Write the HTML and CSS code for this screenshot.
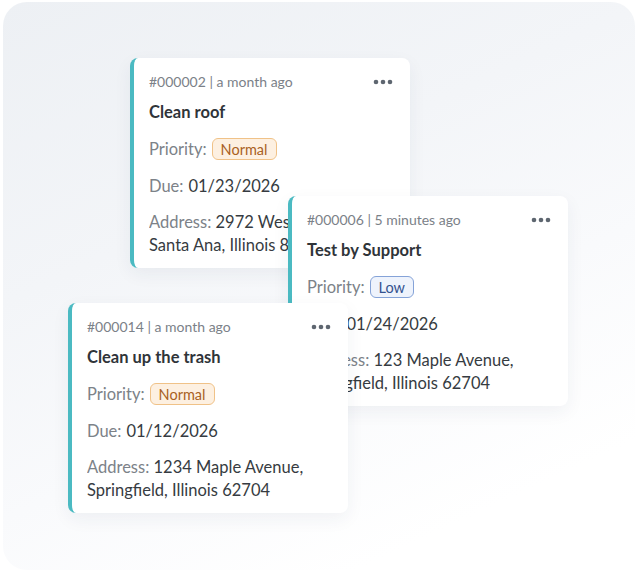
FILE: index.html
```html
<!DOCTYPE html>
<html lang="en">
<head>
<meta charset="utf-8">
<title>Tasks</title>
<link rel="stylesheet" href="styles.css">
</head>
<body>
<div class="canvas">
  <div class="card card-a">
    <div class="meta-row">
      <span class="meta">#000002 | a month ago</span>
      <svg class="dots" width="20" height="6" viewBox="0 0 20 6"><circle cx="3" cy="3" r="2.3"/><circle cx="10" cy="3" r="2.3"/><circle cx="17" cy="3" r="2.3"/></svg>
    </div>
    <div class="title">Clean roof</div>
    <div class="row"><span class="label">Priority:</span><span class="badge normal">Normal</span></div>
    <div class="row"><span class="label">Due:</span><span class="value">01/23/2026</span></div>
    <div class="addr"><span class="label">Address:</span> <span class="value">2972 Westheimer Rd.<br>Santa Ana, Illinois 85486</span></div>
  </div>
  <div class="card card-b">
    <div class="meta-row">
      <span class="meta">#000006 | 5 minutes ago</span>
      <svg class="dots" width="20" height="6" viewBox="0 0 20 6"><circle cx="3" cy="3" r="2.3"/><circle cx="10" cy="3" r="2.3"/><circle cx="17" cy="3" r="2.3"/></svg>
    </div>
    <div class="title">Test by Support</div>
    <div class="row"><span class="label">Priority:</span><span class="badge low">Low</span></div>
    <div class="row"><span class="label">Due:</span><span class="value">01/24/2026</span></div>
    <div class="addr"><span class="label">Address:</span> <span class="value">123 Maple Avenue,<br>Springfield, Illinois 62704</span></div>
  </div>
  <div class="card card-c">
    <div class="meta-row">
      <span class="meta">#000014 | a month ago</span>
      <svg class="dots" width="20" height="6" viewBox="0 0 20 6"><circle cx="3" cy="3" r="2.3"/><circle cx="10" cy="3" r="2.3"/><circle cx="17" cy="3" r="2.3"/></svg>
    </div>
    <div class="title">Clean up the trash</div>
    <div class="row"><span class="label">Priority:</span><span class="badge normal">Normal</span></div>
    <div class="row"><span class="label">Due:</span><span class="value">01/12/2026</span></div>
    <div class="addr"><span class="label">Address:</span> <span class="value">1234 Maple Avenue,<br>Springfield, Illinois 62704</span></div>
  </div>
</div>
</body>
</html>
```
FILE: styles.css
```css
html, body {
  margin: 0;
  padding: 0;
  background: #ffffff;
}
body {
  font-family: Lato, "Noto Sans", sans-serif;
  padding: 2px 2px 3px 3px;
}
.canvas {
  position: relative;
  width: 632px;
  height: 568px;
  border-radius: 24px;
  background: linear-gradient(155deg, #edf0f4 0%, #f3f5f8 35%, #f9fafc 60%, #ffffff 85%);
  overflow: hidden;
}
.card {
  position: absolute;
  width: 280px;
  height: 210px;
  box-sizing: border-box;
  background: #ffffff;
  border-left: 4px solid #4bbac2;
  border-radius: 8px;
  box-shadow: 0 6px 18px rgba(40, 55, 80, 0.06);
  padding: 14px 17px 0 15px;
  display: flex;
  flex-direction: column;
  color: #363b41;
}
.card-a { left: 127px; top: 56px; }
.card-b { left: 285px; top: 194px; }
.card-c { left: 65px; top: 301px; }
.meta-row {
  display: flex;
  align-items: center;
  justify-content: space-between;
  height: 20px;
}
.meta {
  font-size: 14px;
  color: #7b8188;
  line-height: 20px;
}
.dots { fill: #5e6670; }
.title {
  margin-top: 9px;
  font-size: 16.5px;
  font-weight: 700;
  line-height: 22px;
  color: #2f3439;
}
.row {
  display: flex;
  align-items: center;
  gap: 5px;
  height: 24px;
  font-size: 16.5px;
  margin-top: 13px;
}
.row:nth-of-type(3) { margin-top: 14px; }
.label { color: #7c8288; }
.value { color: #363b41; }
.addr {
  margin-top: 13px;
  font-size: 16.5px;
  line-height: 23px;
  white-space: nowrap;
  overflow: hidden;
}
.badge {
  display: inline-flex;
  align-items: center;
  height: 22px;
  box-sizing: border-box;
  padding: 0 8px;
  border-radius: 6px;
  font-size: 14.5px;
}
.badge.normal {
  background: #fdf0e1;
  border: 1px solid #f0c288;
  color: #a9601f;
}
.badge.low {
  background: #eef3fc;
  border: 1px solid #85a3d8;
  color: #34528f;
}
```
